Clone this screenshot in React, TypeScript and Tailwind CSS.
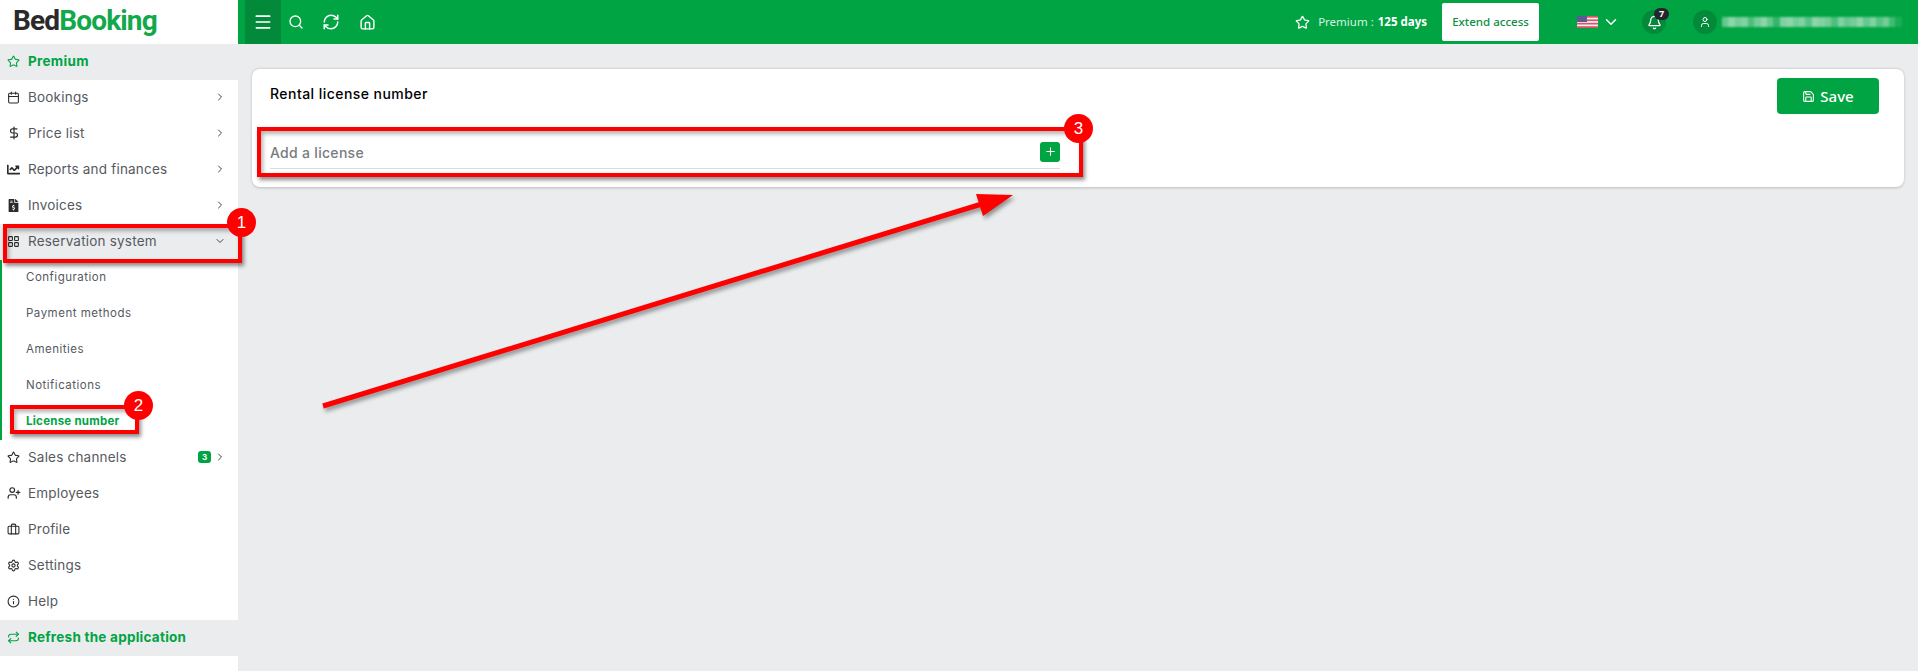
import {
  Bell, Briefcase, Calendar, ChevronDown, ChevronRight, DollarSign, Home, Info, LayoutGrid,
  Menu, Plus, RefreshCw, Repeat, Save, Search, Settings, Star, User, UserPlus,
} from 'lucide-react';
import { FaChartLine, FaFileInvoiceDollar } from 'react-icons/fa';
import type { ReactNode } from 'react';

const menuFont = "font-['Inter','Liberation_Sans',sans-serif]";
const barFont = "font-['Noto_Sans','Liberation_Sans',sans-serif]";

interface RowProps {
  icon: ReactNode;
  label: string;
  arrow?: 'right' | 'down';
  badge?: string;
}

function MenuRow({ icon, label, arrow, badge }: RowProps) {
  return (
    <div className="flex h-9 items-center pb-[2px] pl-[7px] pr-[12px] text-[13.5px] text-[#555a5f]">
      <span className="flex w-[21px] text-[#2b2b2b]">{icon}</span>
      <span className="tracking-[0.2px]">{label}</span>
      {badge && (
        <span className="ml-auto flex h-3 w-[13px] items-center justify-center rounded-[3px] bg-[#00a443] text-[8px] font-bold text-white">
          {badge}
        </span>
      )}
      {arrow === 'right' && <ChevronRight size={12} className={`${badge ? 'ml-[3px]' : 'ml-auto'} text-[#444]`} />}
      {arrow === 'down' && <ChevronDown size={12} className="ml-auto text-[#444]" />}
    </div>
  );
}

function SubRow({ label, active }: { label: string; active?: boolean }) {
  return (
    <div className={`flex h-9 items-center pl-6 text-[11.5px] ${active ? 'font-bold tracking-[0.25px] text-[#00a443]' : 'tracking-[0.5px] text-[#555a5f]'}`}>
      {label}
    </div>
  );
}

function Sidebar() {
  return (
    <aside className={`w-[238px] shrink-0 bg-white ${menuFont}`}>
      <div className="flex h-11 items-center pb-[2px] pl-[13px] font-['Roboto',sans-serif] text-[28px] font-bold tracking-[-0.85px]">
        <span className="text-[#2a2a2a]">Bed</span>
        <span className="text-[#12a84c]">Booking</span>
      </div>
      <div className="flex h-9 items-center bg-[#ebecee] pb-[2px] pl-[7px] text-[13.5px] font-bold tracking-[0.3px] text-[#00a443]">
        <Star size={13} className="mr-2" />
        Premium
      </div>
      <MenuRow icon={<Calendar size={13} />} label="Bookings" arrow="right" />
      <MenuRow icon={<DollarSign size={14} />} label="Price list" arrow="right" />
      <MenuRow icon={<FaChartLine size={13} />} label="Reports and finances" arrow="right" />
      <MenuRow icon={<FaFileInvoiceDollar size={13} />} label="Invoices" arrow="right" />
      <div className="bg-[#ebecee]">
        <MenuRow icon={<LayoutGrid size={13} />} label="Reservation system" arrow="down" />
      </div>
      <div className="border-l-2 border-[#00a443]">
        <SubRow label="Configuration" />
        <SubRow label="Payment methods" />
        <SubRow label="Amenities" />
        <SubRow label="Notifications" />
        <SubRow label="License number" active />
      </div>
      <MenuRow icon={<Star size={13} />} label="Sales channels" arrow="right" badge="3" />
      <MenuRow icon={<UserPlus size={14} />} label="Employees" />
      <MenuRow icon={<Briefcase size={13} />} label="Profile" />
      <MenuRow icon={<Settings size={13} />} label="Settings" />
      <MenuRow icon={<Info size={13} />} label="Help" />
      <div className="flex h-9 items-center bg-[#ebecee] pb-[2px] pl-[7px] text-[13.5px] font-bold tracking-[0.25px] text-[#00a443]">
        <Repeat size={13} className="mr-2" />
        Refresh the application
      </div>
    </aside>
  );
}

const blurBlocks = [
  40, 55, 45, 50, 30, 45, 55, 40, 20, 50, 55, 45, 50, 35, 55, 50, 45, 30, 50, 40, 45, 55, 40, 50, 35, 45, 25, 10,
];

function TopBar() {
  return (
    <header className={`flex h-11 items-center bg-[#00a443] text-white ${barFont}`}>
      <div className="ml-[7px] flex h-11 w-9 items-center justify-center bg-[#028a3a]">
        <Menu size={20} />
      </div>
      <Search size={16} className="ml-[7px]" />
      <RefreshCw size={18} className="ml-[18px]" />
      <Home size={17} className="ml-[19px]" />
      <div className="ml-auto flex items-center">
        <Star size={15} className="mr-[8px]" />
        <span className="text-[11.5px] text-[#d9f2e2]">Premium :</span>
        <span className="ml-1 text-[11.5px] font-bold">125 days</span>
        <div className="ml-[15px] flex h-[38px] w-[97px] items-center justify-center rounded-[2px] bg-white text-[11.5px] font-medium text-[#0b8f42]">
          Extend access
        </div>
        <svg width="21" height="12" viewBox="0 0 21 12" className="ml-[38px]">
          <rect width="21" height="12" fill="#f3f0f2" />
          <rect y="0" width="21" height="1.7" fill="#d9566a" />
          <rect y="3.4" width="21" height="1.7" fill="#d9566a" />
          <rect y="6.8" width="21" height="1.7" fill="#d9566a" />
          <rect y="10.2" width="21" height="1.8" fill="#d9566a" />
          <rect width="10" height="6" fill="#5b5a92" />
        </svg>
        <ChevronDown size={18} className="ml-[4px]" />
        <div className="relative ml-[22px] flex h-6 w-6 items-center justify-center rounded-full bg-[#028a3a]">
          <Bell size={15} />
          <span className="absolute -right-[3px] -top-[2px] flex h-3 w-[15px] items-center justify-center rounded-full bg-[#23262a] text-[9px] font-bold">
            7
          </span>
        </div>
        <div className="ml-[27px] flex h-6 w-6 items-center justify-center rounded-full bg-[#028a3a]">
          <User size={12} />
        </div>
        <div className="ml-[5px] mr-4 flex h-[10px] w-[180px] blur-[1px]">
          {blurBlocks.map((o, i) => (
            <span key={i} className="h-full flex-1 bg-white" style={{ opacity: o / 100 }} />
          ))}
        </div>
      </div>
    </header>
  );
}

function Card() {
  return (
    <section className="ml-[14px] mr-[14px] mt-6 h-[119px] rounded-lg border-t border-[#d7d9dc] bg-white pl-[18px] pr-[25px] shadow-[0_1px_3px_rgba(0,0,0,0.2)]">
      <div className="flex h-[46px] items-start justify-between pt-[9px]">
        <h2 className={`pt-[5px] text-[14px] font-medium tracking-[0.45px] text-black ${menuFont}`}>Rental license number</h2>
        <button className={`flex h-9 w-[102px] items-center justify-center gap-[5px] rounded-[4px] bg-[#00a443] text-[15px] font-medium text-white ${barFont}`}>
          <Save size={13} />
          Save
        </button>
      </div>
      <div className="mt-[22px] flex h-[32px] w-[790px] items-center justify-between border-b border-[#dcdcdc] pb-[2px]">
        <span className={`pt-[2px] text-[14px] font-medium tracking-[0.3px] text-[#777b80] ${menuFont}`}>Add a license</span>
        <span className="flex h-5 w-5 items-center justify-center rounded-[3px] bg-[#00a443] text-white">
          <Plus size={13} />
        </span>
      </div>
    </section>
  );
}

// red markers painted on top of the screenshot
function Marker({ n, className }: { n: string; className: string }) {
  return (
    <div className={`absolute flex h-[29px] w-[29px] items-center justify-center rounded-full bg-[#ff0000] font-['Liberation_Sans',sans-serif] text-[17px] text-white ${className}`}>
      {n}
    </div>
  );
}

function Annotations() {
  const boxClass = 'absolute border-4 border-[#ff0000] shadow-[2px_3px_4px_rgba(0,0,0,0.45),inset_2px_3px_4px_rgba(0,0,0,0.3)]';
  return (
    <>
      <div className={`${boxClass} left-[3px] top-[224px] h-[39px] w-[239px]`} />
      <div className={`${boxClass} left-[10px] top-[405px] h-[29px] w-[129px]`} />
      <div className={`${boxClass} left-[257px] top-[127px] h-[50px] w-[826px]`} />
      <Marker n="1" className="left-[227px] top-[208px]" />
      <Marker n="2" className="left-[124px] top-[391px]" />
      <Marker n="3" className="left-[1064px] top-[114px]" />
      <svg width="1918" height="671" className="pointer-events-none absolute left-0 top-0 drop-shadow-[2px_3px_2px_rgba(0,0,0,0.4)]">
        <line x1="323" y1="406" x2="985" y2="203" stroke="#ff0000" strokeWidth="5" />
        <polygon points="1013,195 976,194 983,216" fill="#ff0000" />
      </svg>
    </>
  );
}

export default function App() {
  return (
    <div className="relative flex h-[671px] w-[1918px] overflow-hidden bg-[#ebecee]">
      <Sidebar />
      <div className="min-w-0 flex-1">
        <TopBar />
        <Card />
      </div>
      <Annotations />
    </div>
  );
}
